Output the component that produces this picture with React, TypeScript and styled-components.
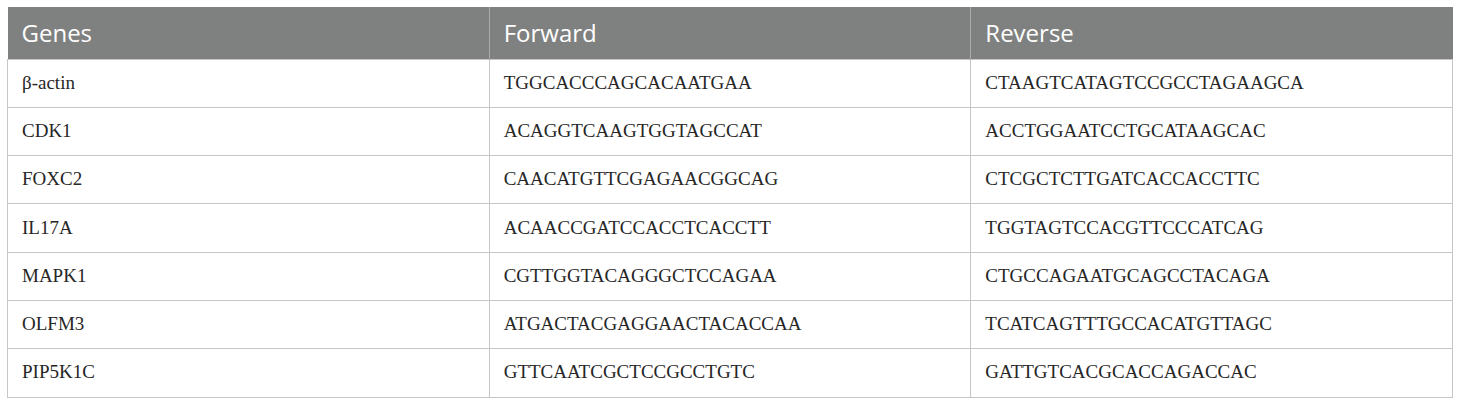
import React from "react";
import styled, { createGlobalStyle } from "styled-components";

const Global = createGlobalStyle`
  html, body { margin: 0; padding: 0; background: #ffffff; }
  body { padding: 7px 7px 0 7px; }
`;

const Table = styled.table`
  width: 1446px;
  border-collapse: collapse;
  table-layout: fixed;
`;

const HeadCell = styled.th`
  background: #7f8180;
  color: #ffffff;
  font-family: "Open Sans", "Noto Sans", sans-serif;
  font-weight: 400;
  font-size: 24px;
  text-align: left;
  height: 52px;
  padding: 0 0 1px 14px;
  border-right: 1px solid #a9aaa9;
  box-sizing: border-box;
  &:last-child { border-right: none; }
`;

const Cell = styled.td`
  font-family: "Liberation Serif", "Times New Roman", serif;
  font-size: 19px;
  color: #262626;
  height: 48.3px;
  padding: 0 0 1px 14px;
  border: 1px solid #c6c6c6;
  box-sizing: border-box;
`;

const rows = [
  ["β-actin", "TGGCACCCAGCACAATGAA", "CTAAGTCATAGTCCGCCTAGAAGCA"],
  ["CDK1", "ACAGGTCAAGTGGTAGCCAT", "ACCTGGAATCCTGCATAAGCAC"],
  ["FOXC2", "CAACATGTTCGAGAACGGCAG", "CTCGCTCTTGATCACCACCTTC"],
  ["IL17A", "ACAACCGATCCACCTCACCTT", "TGGTAGTCCACGTTCCCATCAG"],
  ["MAPK1", "CGTTGGTACAGGGCTCCAGAA", "CTGCCAGAATGCAGCCTACAGA"],
  ["OLFM3", "ATGACTACGAGGAACTACACCAA", "TCATCAGTTTGCCACATGTTAGC"],
  ["PIP5K1C", "GTTCAATCGCTCCGCCTGTC", "GATTGTCACGCACCAGACCAC"],
];

export default function App() {
  return (
    <>
      <Global />
      <Table>
        <thead>
          <tr>
            <HeadCell>Genes</HeadCell>
            <HeadCell>Forward</HeadCell>
            <HeadCell>Reverse</HeadCell>
          </tr>
        </thead>
        <tbody>
          {rows.map((r) => (
            <tr key={r[0]}>
              {r.map((c, i) => (
                <Cell key={i}>{c}</Cell>
              ))}
            </tr>
          ))}
        </tbody>
      </Table>
    </>
  );
}
